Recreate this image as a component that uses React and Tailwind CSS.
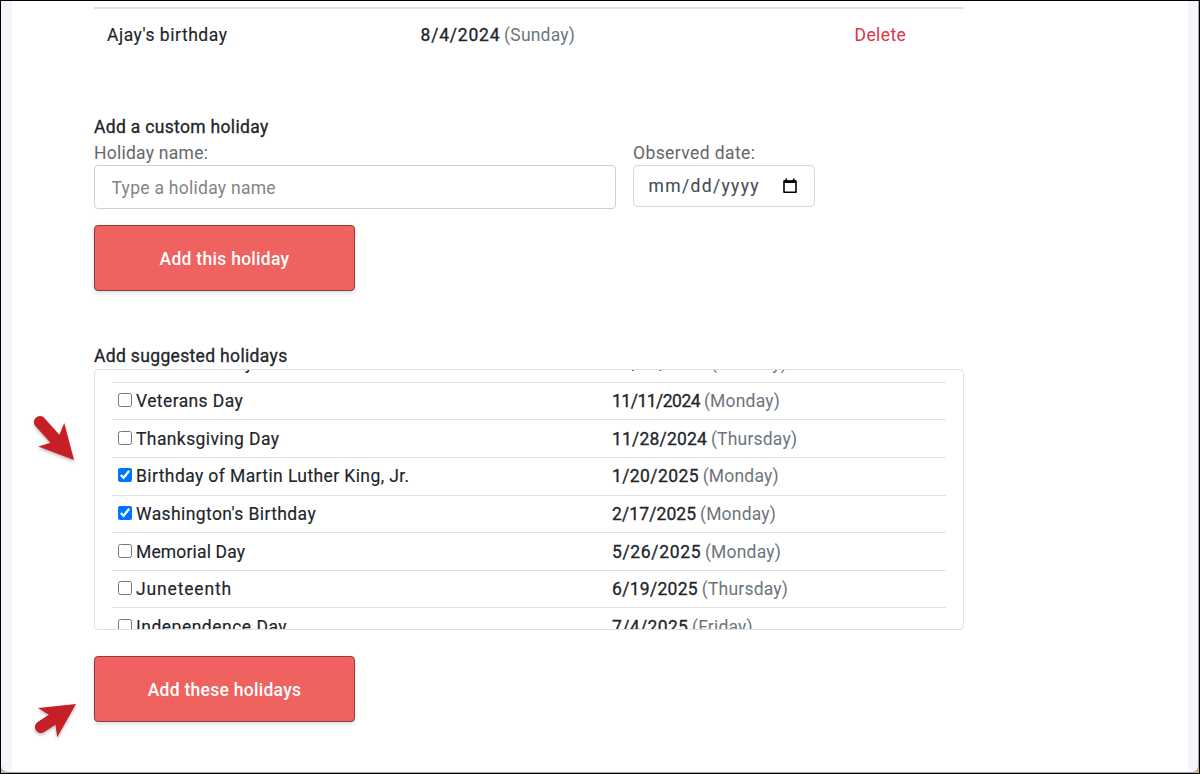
import React, { useState } from "react";

const suggested = [
  { name: "Columbus Day", date: "10/14/2024", day: "Monday", spacing: "tracking-[0.2px]" },
  { name: "Veterans Day", date: "11/11/2024", day: "Monday", spacing: "tracking-[-0.5px]" },
  { name: "Thanksgiving Day", date: "11/28/2024", day: "Thursday", spacing: "tracking-[0.2px]" },
  { name: "Birthday of Martin Luther King, Jr.", date: "1/20/2025", day: "Monday", spacing: "tracking-[0.4px]" },
  { name: "Washington's Birthday", date: "2/17/2025", day: "Monday", spacing: "tracking-[0.1px]" },
  { name: "Memorial Day", date: "5/26/2025", day: "Monday", spacing: "tracking-[0.65px]" },
  { name: "Juneteenth", date: "6/19/2025", day: "Thursday", spacing: "tracking-[0.3px]" },
  { name: "Independence Day", date: "7/4/2025", day: "Friday", spacing: "tracking-[0.35px]" },
];

const nameSpacing = {
  "Memorial Day": "tracking-[0.15px]",
  Juneteenth: "tracking-[0.85px]",
  "Independence Day": "tracking-[0.5px]",
};

function HolidayDate({ date, day, spacing }) {
  return (
    <span className="whitespace-nowrap">
      <span className={`[-webkit-text-stroke:0.3px] ${spacing}`}>{date}</span>{" "}
      <span className="-ml-px text-[#6c757d] tracking-[0.2px]">({day})</span>
    </span>
  );
}

function PrimaryButton({ children }) {
  return (
    <button className="block w-[261px] h-[66px] rounded-[4px] border border-[#8f3a3c] bg-[#f0625f] pt-[2px] font-medium tracking-[0.28px] text-white shadow-[0_2px_4px_rgba(0,0,0,0.15)]">
      {children}
    </button>
  );
}

function CalendarIcon() {
  return (
    <svg width="14" height="16" viewBox="0 0 14 16" fill="none">
      <path d="M1 3h12v11.2H1z" stroke="#000" strokeWidth="1.6" strokeLinejoin="round" />
      <path d="M1 2.5h12v2.5H1zM2.4 0.5h1.7v2H2.4zM9.9 0.5h1.7v2H9.9z" fill="#000" />
    </svg>
  );
}

/* Red pointer arrow, drawn along the x axis with its tip at (0, 0) */
function Pointer({ className, transform, tail }) {
  return (
    <svg
      className={`absolute overflow-visible drop-shadow-[0_2px_1.5px_rgba(0,0,0,0.25)] ${className}`}
      width="1"
      height="1"
      fill="#c62026"
    >
      <path
        transform={transform}
        d={`M0 0L-34 -17.5L-28.5 -6L${-tail} -6A6 6 0 0 0 ${-tail} 6L-28.5 6L-34 17.5Z`}
      />
    </svg>
  );
}

export default function App() {
  const [checked, setChecked] = useState([3, 4]);

  const toggle = (i) => {
    setChecked((prev) =>
      prev.includes(i) ? prev.filter((c) => c !== i) : [...prev, i]
    );
  };

  return (
    <div className="relative w-[1200px] h-[774px] overflow-hidden border border-black bg-linear-to-r from-[#bdbdbf] to-[#c9b48c] font-[Roboto,sans-serif] text-[17.5px] leading-[26px] tracking-[0.4px] text-[#212529]">
      <div className="h-full rounded-b-[7px] border-r border-b border-[#a5a5a9] bg-[#f5f6fb] pl-[11px] pr-[10px]">
        <div className="h-full bg-white pl-[82px] pt-[6px]">
          {/* Current holidays */}
          <div className="flex w-[870px] border-t-2 border-[#e0e2e5] pl-[13px] pt-[13px]">
            <span className="w-[313.5px] tracking-[0.53px] [-webkit-text-stroke:0.15px]">
              Ajay's birthday
            </span>
            <span className="w-[434px]">
              <HolidayDate date="8/4/2024" day="Sunday" spacing="tracking-[0.8px]" />
            </span>
            <a className="text-[#dc3545]">Delete</a>
          </div>

          {/* Custom holiday */}
          <h2 className="mt-[66px] tracking-[0.32px] [-webkit-text-stroke:0.3px]">
            Add a custom holiday
          </h2>
          <div className="-mb-px flex gap-[17px] text-[#666]">
            <label>
              <span className="block tracking-[0.25px]">Holiday name:</span>
              <input
                type="text"
                placeholder="Type a holiday name"
                className="-mt-px block w-[522px] h-[44px] rounded-[4px] border border-[#ced0d2] px-[16.5px] pt-px tracking-[0.27px] placeholder:text-[#848484]"
              />
            </label>
            <div>
              <span className="block">Observed date:</span>
              <div className="-mt-px flex w-[182px] h-[42px] items-center justify-between rounded-[4px] border border-[#d5d8da] pl-[14.5px] pr-[17px] text-[#495057]">
                <span className="tracking-[1.35px] [-webkit-text-stroke:0.15px]">mm/dd/yyyy</span>
                <CalendarIcon />
              </div>
            </div>
          </div>
          <div className="mt-[17px]">
            <PrimaryButton>Add this holiday</PrimaryButton>
          </div>

          {/* Suggested holidays */}
          <h2 className="mt-[52px] tracking-[0.34px] [-webkit-text-stroke:0.3px]">
            Add suggested holidays
          </h2>
          <div className="w-[870px] h-[261px] overflow-hidden rounded-[4px] border border-[#dee2e6] px-[17px]">
            <div className="-mt-[25px]">
              {suggested.map((h, i) => (
                <div
                  key={h.name}
                  className="flex h-[37.65px] items-center border-b border-[#dee2e6] pl-[6px]"
                >
                  <label className="flex w-[494px] items-center gap-[4px]">
                    <input
                      type="checkbox"
                      checked={checked.includes(i)}
                      onChange={() => toggle(i)}
                      className="mb-[2px] size-[14px]"
                    />
                    <span className={`[-webkit-text-stroke:0.15px] ${nameSpacing[h.name] || ""}`}>
                      {h.name}
                    </span>
                  </label>
                  <HolidayDate date={h.date} day={h.day} spacing={h.spacing} />
                </div>
              ))}
            </div>
          </div>
          <div className="mt-[26px]">
            <PrimaryButton>Add these holidays</PrimaryButton>
          </div>
        </div>
      </div>

      <Pointer className="left-[73px] top-[459px]" transform="rotate(48)" tail={51} />
      <Pointer className="left-[75px] top-[703px]" transform="rotate(-33.3)" tail={42} />
    </div>
  );
}
